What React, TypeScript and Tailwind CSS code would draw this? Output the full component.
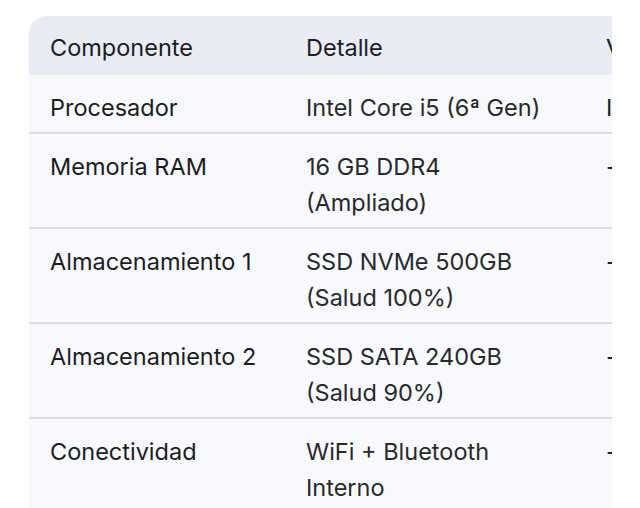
const rows: { name: string; detail: string[]; value: string }[] = [
  { name: "Procesador", detail: ["Intel Core i5 (6ª Gen)"], value: "Incluido" },
  { name: "Memoria RAM", detail: ["16 GB DDR4", "(Ampliado)"], value: "-" },
  { name: "Almacenamiento 1", detail: ["SSD NVMe 500GB", "(Salud 100%)"], value: "-" },
  { name: "Almacenamiento 2", detail: ["SSD SATA 240GB", "(Salud 90%)"], value: "-" },
  { name: "Conectividad", detail: ["WiFi + Bluetooth", "Interno"], value: "-" },
];

export default function App() {
  return (
    <div
      className="w-[640px] h-[508px] bg-white overflow-hidden pt-4 pl-[29px]"
      style={{ fontFamily: "Inter, 'Noto Sans', sans-serif" }}
    >
      <div className="w-[583px] h-[492px] overflow-hidden rounded-tl-[18px] bg-[#f8f9fc]">
        <table className="table-fixed w-[800px] border-collapse text-[23.5px] leading-[36px] text-[#1c1c1f]">
          <colgroup>
            <col className="w-[256px]" />
            <col className="w-[300px]" />
            <col className="w-[244px]" />
          </colgroup>
          <thead>
            <tr className="bg-[#e9ebf5] text-left">
              <th className="font-normal pl-[21px] pt-[14px] pb-[9px]">Componente</th>
              <th className="font-normal pl-[21px] pt-[14px] pb-[9px]">Detalle</th>
              <th className="font-normal pl-[21px] pt-[14px] pb-[9px]">Valor</th>
            </tr>
          </thead>
          <tbody>
            {rows.map((r, i) => (
              <tr key={r.name} className={i < rows.length - 1 ? "border-b-2 border-[#dcdde2]" : ""}>
                <td className="align-top pl-[21px] pt-[15px] pb-[6px]">{r.name}</td>
                <td className="align-top pl-[21px] pt-[15px] pb-[6px] text-[#28292c]">
                  {r.detail.map((d) => (
                    <div key={d}>{d}</div>
                  ))}
                </td>
                <td className="align-top pl-[21px] pt-[15px] pb-[6px]">{r.value}</td>
              </tr>
            ))}
          </tbody>
        </table>
      </div>
    </div>
  );
}
